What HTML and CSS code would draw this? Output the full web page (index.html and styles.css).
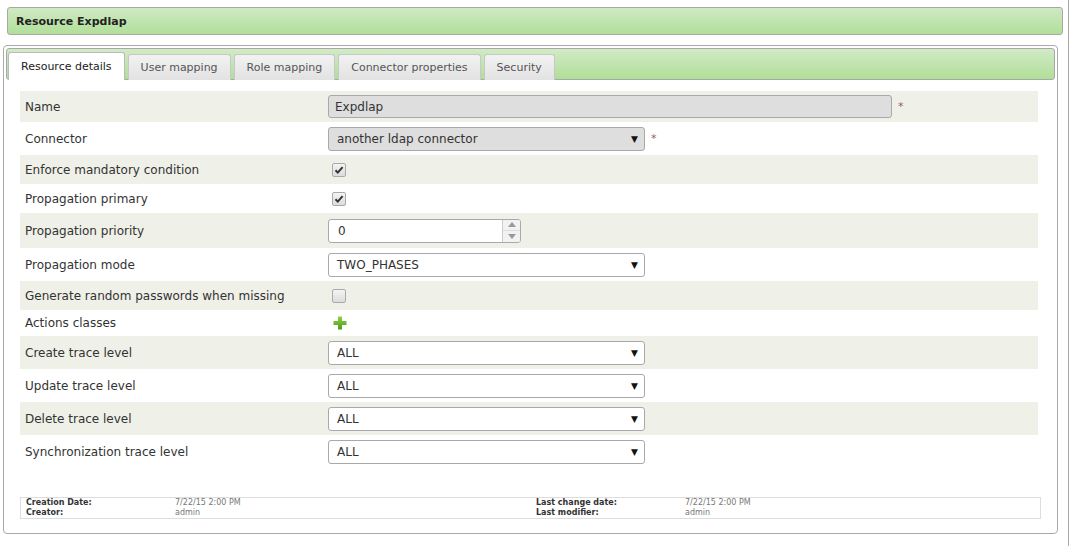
FILE: index.html
```html
<!DOCTYPE html>
<html>
<head>
<meta charset="utf-8">
<link rel="stylesheet" href="styles.css">
</head>
<body>
<div class="frame">
  <div class="page-title">Resource Expdlap</div>
  <div class="tabbox">
    <div class="tabbar">
      <div class="tab active">Resource details</div>
      <div class="tab">User mapping</div>
      <div class="tab">Role mapping</div>
      <div class="tab">Connector properties</div>
      <div class="tab">Security</div>
    </div>
    <div class="panel">
      <div class="form">
        <div class="row alt h31">
          <div class="label">Name</div>
          <div class="field"><div class="input disabled wide">Expdlap</div><span class="req">*</span></div>
        </div>
        <div class="row h33">
          <div class="label">Connector</div>
          <div class="field"><div class="select disabled">another ldap connector<span class="arrow">▼</span></div><span class="req">*</span></div>
        </div>
        <div class="row alt h29">
          <div class="label">Enforce mandatory condition</div>
          <div class="field"><span class="check"><svg viewBox="0 0 12 12" width="12" height="12"><path d="M2.5 6.2 L4.8 8.6 L9.6 3.2" fill="none" stroke="#333" stroke-width="2"/></svg></span></div>
        </div>
        <div class="row h29">
          <div class="label">Propagation primary</div>
          <div class="field"><span class="check"><svg viewBox="0 0 12 12" width="12" height="12"><path d="M2.5 6.2 L4.8 8.6 L9.6 3.2" fill="none" stroke="#333" stroke-width="2"/></svg></span></div>
        </div>
        <div class="row alt h35">
          <div class="label">Propagation priority</div>
          <div class="field"><div class="number"><span class="num-val">0</span><span class="spin"><span class="spin-up"><svg viewBox="0 0 8 5" width="8" height="5"><path d="M0 5 L4 0 L8 5Z" fill="#999"/></svg></span><span class="spin-down"><svg viewBox="0 0 8 5" width="8" height="5"><path d="M0 0 L4 5 L8 0Z" fill="#999"/></svg></span></span></div></div>
        </div>
        <div class="row h33">
          <div class="label">Propagation mode</div>
          <div class="field"><div class="select">TWO_PHASES<span class="arrow">▼</span></div></div>
        </div>
        <div class="row alt h29">
          <div class="label">Generate random passwords when missing</div>
          <div class="field"><span class="check"></span></div>
        </div>
        <div class="row h26">
          <div class="label">Actions classes</div>
          <div class="field"><svg class="plus" viewBox="0 0 14 14" width="14" height="14"><defs><linearGradient id="pg" x1="0" y1="0" x2="0" y2="1"><stop offset="0" stop-color="#8fd046"/><stop offset="1" stop-color="#4c9e16"/></linearGradient></defs><path d="M5 0.5 H9 V5 H13.5 V9 H9 V13.5 H5 V9 H0.5 V5 H5Z" fill="url(#pg)"/></svg></div>
        </div>
        <div class="row alt h33">
          <div class="label">Create trace level</div>
          <div class="field"><div class="select">ALL<span class="arrow">▼</span></div></div>
        </div>
        <div class="row h33">
          <div class="label">Update trace level</div>
          <div class="field"><div class="select">ALL<span class="arrow">▼</span></div></div>
        </div>
        <div class="row alt h33">
          <div class="label">Delete trace level</div>
          <div class="field"><div class="select">ALL<span class="arrow">▼</span></div></div>
        </div>
        <div class="row h33">
          <div class="label">Synchronization trace level</div>
          <div class="field"><div class="select">ALL<span class="arrow">▼</span></div></div>
        </div>
      </div>
      <div class="footer">
        <div class="meta">
          <span class="mk">Creation Date:</span><span class="mv">7/22/15 2:00 PM</span>
          <span class="mk">Creator:</span><span class="mv">admin</span>
        </div>
        <div class="meta">
          <span class="mk">Last change date:</span><span class="mv">7/22/15 2:00 PM</span>
          <span class="mk">Last modifier:</span><span class="mv">admin</span>
        </div>
      </div>
    </div>
  </div>
</div>
</body>
</html>
```

FILE: styles.css
```css
html, body {
  margin: 0;
  padding: 0;
  background: #fff;
}
body {
  font-family: "DejaVu Sans", Verdana, sans-serif;
  color: #333;
  font-size: 12px;
}
.frame {
  width: 1069px;
  height: 546px;
  border-right: 1px solid #aaa;
  padding-top: 7px;
  box-sizing: border-box;
}
.page-title {
  margin-left: 7px;
  width: 1056px;
  height: 28px;
  box-sizing: border-box;
  border: 1px solid #a8a8a8;
  border-radius: 3px;
  background: linear-gradient(#cfe9c3, #b1df9a);
  font-weight: bold;
  font-size: 11px;
  color: #222;
  padding-left: 8px;
  display: flex;
  align-items: center;
}
.tabbox {
  margin-top: 10px;
  margin-left: 3px;
  width: 1055px;
  height: 489px;
  box-sizing: border-box;
  border: 1px solid #aaa;
  border-radius: 4px;
  padding: 2px;
  display: flex;
  flex-direction: column;
}
.tabbar {
  height: 32px;
  box-sizing: border-box;
  border: 1px solid #a8a8a8;
  border-radius: 3px;
  background: linear-gradient(#d2ebc6, #b0de98);
  display: flex;
  align-items: flex-end;
  gap: 3px;
  padding-left: 1px;
}
.tab {
  height: 26px;
  box-sizing: border-box;
  border: 1px solid #c8c8c8;
  border-bottom: none;
  border-radius: 3px 3px 0 0;
  background: linear-gradient(#f2f2f2, #e2e2e2);
  font-size: 11px;
  color: #555;
  padding: 0 12px;
  display: flex;
  align-items: center;
  margin-bottom: -1px;
}
.tab.active {
  background: #fff;
  color: #222;
  height: 28px;
  position: relative;
  border-color: #bbb;
  padding: 0 12px;
}
.panel {
  flex: 1;
  display: flex;
  flex-direction: column;
  padding: 11px 14px 0 14px;
}
.form {
  width: 1018px;
}
.row {
  display: grid;
  grid-template-columns: 308px 1fr;
  align-items: center;
}
.row.alt { background: #eff0e8; }
.h26 { height: 26px; }
.h29 { height: 29px; }
.h31 { height: 31px; }
.h33 { height: 33px; }
.h35 { height: 35px; }
.label {
  padding-left: 5px;
  color: #333;
}
.field {
  display: flex;
  align-items: center;
}
.input, .select, .number {
  box-sizing: border-box;
  height: 24px;
  border: 1px solid #a9a9a9;
  border-radius: 3px;
  background: #fff;
  color: #333;
  display: flex;
  align-items: center;
}
.input {
  padding-left: 6px;
}
.input.wide {
  width: 564px;
  height: 23px;
}
.disabled {
  background: #dedede;
}
.select {
  width: 317px;
  padding-left: 8px;
  padding-right: 6px;
  justify-content: space-between;
}
.arrow {
  font-size: 9px;
  color: #111;
}
.req {
  color: #9a5a5a;
  margin-left: 6px;
  font-size: 11px;
}
.check {
  width: 12px;
  height: 12px;
  margin-left: 4px;
  border: 1px solid #aaa;
  border-radius: 2px;
  background: linear-gradient(#f4f4f4, #dcdcdc);
  display: flex;
  align-items: center;
  justify-content: center;
}
.number {
  width: 193px;
  padding-left: 9px;
  justify-content: space-between;
}
.spin {
  width: 17px;
  height: 22px;
  border-left: 1px solid #ccc;
  display: flex;
  flex-direction: column;
}
.spin-up, .spin-down {
  flex: 1;
  display: flex;
  align-items: center;
  justify-content: center;
  background: #f2f2f2;
}
.spin-up { border-bottom: 1px solid #ddd; border-top-right-radius: 2px; }
.spin-down { border-bottom-right-radius: 2px; }
.plus {
  margin-left: 5px;
}
.footer {
  margin-top: 29px;
  width: 1021px;
  height: 22px;
  box-sizing: border-box;
  border: 1px solid #ddd;
  display: grid;
  grid-template-columns: 510px 1fr;
  padding-left: 5px;
  align-content: center;
}
.meta {
  display: grid;
  grid-template-columns: 149px 1fr;
  font-size: 8px;
  line-height: 10px;
}
.mk {
  font-weight: bold;
  color: #333;
}
.mv {
  color: #777;
}
```
